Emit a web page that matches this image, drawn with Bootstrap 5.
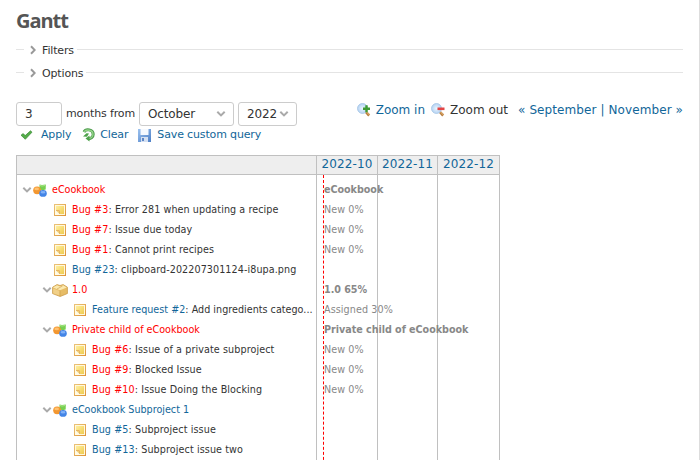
<!DOCTYPE html>
<html lang="en">
<head>
<meta charset="utf-8">
<title>Gantt</title>
<link href="https://cdn.jsdelivr.net/npm/bootstrap@5.3.0/dist/css/bootstrap.min.css" rel="stylesheet">
<style>
html,body{height:460px;overflow:hidden}
body{font:12px/18px Verdana,"DejaVu Sans",sans-serif;color:#333;background:#fff;border-right:1px solid #ddd}
a{color:#169;text-decoration:none}
svg{display:block;flex:none}
.page{padding:8px 16px 0}
h2.title{font:bold 20px/26px "Trebuchet MS","Open Sans",sans-serif;color:#555;letter-spacing:-1.05px;margin:0 0 8px}
.fold{height:16px;margin-bottom:7px;padding-top:1px;font-size:11px;letter-spacing:-.15px}
.fold::before{content:"";width:8px;border-top:1px solid #e4e4e4;margin:0 6px 3px 0}
.fold::after{content:"";flex:1;border-top:1px solid #e4e4e4;margin:0 0 3px 3px}
.fold svg{margin:0 6px 1px 0}
.field{height:24px;border:1px solid #ccc;border-radius:3px;padding:0 7px 0 8px;color:#333;background:#fff}
.query{margin-top:21px}
.controls{font-size:11px;letter-spacing:-.14px}
.controls .field{font-size:12px}
.contextual{height:17px;margin-top:-1px}
.contextual svg{margin-right:5px}
.contextual .zout{margin-left:6px}
.contextual .nav-months{margin-left:10px;letter-spacing:.09px}
.actions{height:18px;font-size:11px;letter-spacing:-.15px}
.gantt{width:484px;height:320px;margin-top:11px;display:grid;grid-template-columns:299px 61px 60px 62px;grid-template-rows:19px 300px;border:1px solid #c0c0c0}
.gantt .hd{background:#eee;border-bottom:1px solid #c0c0c0}
.gantt .month{border-left:1px solid #c0c0c0;text-align:center;line-height:17px;letter-spacing:.14px}
.gantt .line{border-left:1px solid #c0c0c0;grid-row:2}
.subjects{grid-column:1;grid-row:2;padding-top:5px}
.statuses{grid-column:2/5;grid-row:2;padding-top:5px;margin-left:7px;border-left:1px dashed red}
.rowline{height:20px;line-height:20px;font-size:9.6px;white-space:nowrap}
.subjects .rowline{padding-left:5px}
.subjects .lv1{padding-left:25px}
.subjects .issue1{padding-left:37px;letter-spacing:.08px}
.subjects .issue2{padding-left:57px;letter-spacing:.1px}
.subjects .long{letter-spacing:.02px}
.subjects svg{margin-right:6px}
.subjects svg.arr{margin-right:1px}
.subjects svg.pj{margin-right:5px}
.subjects svg.pk{margin:0 4px 0 -1px}
.late{color:red}
.statuses .rowline{color:#888;letter-spacing:.1px}
.statuses .fw-bold{letter-spacing:-.03px}
</style>
<script src="https://cdn.jsdelivr.net/npm/bootstrap@5.3.0/dist/js/bootstrap.bundle.min.js"></script>
</head>
<body>
<svg width="0" height="0" class="position-absolute">
<defs>
<linearGradient id="gold" x1="0" y1="0" x2="1" y2="1"><stop offset="0" stop-color="#fff0a0"/><stop offset="1" stop-color="#efcb50"/></linearGradient>
<linearGradient id="edge" x1="0" y1="0" x2="1" y2="1"><stop offset="0" stop-color="#ecc67c"/><stop offset="1" stop-color="#dc9136"/></linearGradient>
<radialGradient id="glass"><stop offset="0" stop-color="#eaf5ff"/><stop offset="1" stop-color="#b4d2f2"/></radialGradient>
<linearGradient id="disk" x1="0" y1="0" x2="1" y2="1"><stop offset="0" stop-color="#9dc3f0"/><stop offset="1" stop-color="#4d7fc6"/></linearGradient>
</defs>
<symbol id="note" viewBox="0 0 12 12"><path fill="url(#edge)" d="M0 0h12v12H0z"/><path fill="#fff8dc" d="M1 1h10v10H1z"/><path fill="url(#gold)" d="M2 2h8v8H2z"/><path fill="#fffbe6" d="M1 6h5v5H1z"/><path fill="#f3d078" d="M2 6.500 5.500 10V6.500z"/><path d="M2 6.500h3.500V10" fill="none" stroke="#dfa94e" stroke-width=".8"/></symbol>
<symbol id="projects" viewBox="0 0 14 13"><path fill="#76ce50" d="M6.500.5 9 .9l3.800-.5-.1 5-2.900.9-3.300-.9z"/><path d="m7 1.500 2 .5 3-.5" stroke="#a9e688" fill="none"/><circle cx="4.100" cy="6.300" r="3.900" fill="#f39730"/><ellipse cx="3.700" cy="4.900" rx="2.300" ry="1.400" fill="#ffc270"/><ellipse cx="10" cy="9.400" rx="3.800" ry="3.400" fill="#4385e6"/><ellipse cx="10" cy="8.300" rx="2.400" ry="1.200" fill="#82b2f8"/></symbol>
<symbol id="package" viewBox="0 0 16 13"><path fill="#e6bc66" stroke="#cb9a48" stroke-width=".8" d="M.6 3.200 5 .6l3 .9 3.200-.9 4.200 2.600v6.300L8.200 12.500.6 9.600z"/><path fill="#fbe9af" d="m1 3.500 4-2.300 3 1.200L11 1.200l3.800 2.400L8 6.300z"/><path fill="#f1d088" d="M1.200 4.400 7.700 6.900v4.700L1.200 9.200z"/><path d="M8 6.500v5.500M5 5l5.500-3" stroke="#cb9a48" stroke-width=".6"/></symbol>
<symbol id="down" viewBox="0 0 10 10"><path d="m1.300 2.700 3.700 3.700 3.700-3.700" fill="none" stroke="#aaa" stroke-width="2"/></symbol>
<symbol id="lens" viewBox="0 0 14 14"><path d="m8.800 8.800 3.400 3.700" stroke="#b87d3d" stroke-width="2.600"/><path d="m9.500 8.900 2.800 3" stroke="#edc084" stroke-width=".9"/><circle cx="5.500" cy="5.500" r="5" fill="url(#glass)" stroke="#a5c4e4" stroke-width=".8"/></symbol>
</svg>
<main class="page">
<h2 class="title">Gantt</h2>
<div class="fold d-flex align-items-center"><svg width="6" height="10" viewBox="0 0 6 10"><path d="m1 1.300 3.700 3.700L1 8.700" fill="none" stroke="#999" stroke-width="2"/></svg>Filters</div>
<div class="fold d-flex align-items-center"><svg width="6" height="10" viewBox="0 0 6 10"><path d="m1 1.300 3.700 3.700L1 8.700" fill="none" stroke="#999" stroke-width="2"/></svg>Options</div>
<div class="query d-flex justify-content-between align-items-start">
<div class="controls d-flex align-items-center">
<div class="field" style="width:46px;line-height:23px">3</div><span class="px-1">months from</span>
<div class="field d-flex align-items-center justify-content-between" style="width:95px">October<svg width="10" height="10"><use href="#down"/></svg></div>
<div class="field d-flex align-items-center justify-content-between ms-1" style="width:59px">2022<svg width="10" height="10"><use href="#down"/></svg></div>
</div>
<div class="contextual d-flex align-items-center">
<svg width="14" height="14"><use href="#lens"/><path d="M9.500 2.200v7M6 5.700H13" stroke="#3e9b35" stroke-width="2.400"/></svg><a href="#">Zoom in</a>
<svg class="zout" width="14" height="14"><use href="#lens"/><path d="M6.500 5.800H13.500" stroke="#e34545" stroke-width="2.600"/></svg><span>Zoom out</span>
<span class="nav-months"><a href="#">« September</a> <a href="#">|</a> <a href="#">November »</a></span>
</div>
</div>
<div class="actions d-flex align-items-center">
<svg width="13" height="10" viewBox="0 0 13 10" style="margin:0 8px 0 4px"><path d="M1 5.200 3.200 3.600 5.200 5.600 10.500.8 12 2.200 5.300 9.300z" fill="#55ad49" stroke="#368a35" stroke-width=".7"/></svg><a href="#">Apply</a>
<svg width="13" height="14" viewBox="0 0 13 14" style="margin:0 5px 0 11px"><path d="M2 4C3.800.3 11.200 1.300 11.200 6.200c0 3.200-2.500 4.600-4.700 4.500" fill="none" stroke="#4b9a4b" stroke-width="3"/><path d="M2 4C4 .8 11 1.700 11 6.300c0 3-2.300 4.300-4.500 4.100" fill="none" stroke="#94d489" stroke-width="1.400"/><path d="M7.500 7.500v6L3.500 10.500zM1 8.500 5 8.800 7 5.500 4.500 5.300z" fill="#4ea24b"/></svg><a href="#">Clear</a>
<svg width="13" height="13" viewBox="0 0 13 13" style="margin:0 6px 0 10px"><path d="M0 0h13v13H0z" fill="url(#disk)"/><path d="M2.500 0h8v6h-8z" fill="#f5f9ff"/><path d="M3 8h7v5H3z" fill="#d4e0f2"/><path d="M4 9h2v3H4z" fill="#5f86c4"/></svg><a href="#">Save custom query</a>
</div>
<section class="gantt">
<div class="hd"></div><div class="hd month"><a href="#">2022-10</a></div><div class="hd month"><a href="#">2022-11</a></div><div class="hd month"><a href="#">2022-12</a></div>
<div class="line" style="grid-column:2"></div><div class="line" style="grid-column:3"></div><div class="line" style="grid-column:4"></div>
<div class="subjects">
<div class="rowline d-flex align-items-center"><svg class="arr" width="10" height="10"><use href="#down"/></svg><svg class="pj" width="14" height="13"><use href="#projects"/></svg><a class="late" href="#">eCookbook</a></div>
<div class="rowline issue1 d-flex align-items-center"><svg width="12" height="12"><use href="#note"/></svg><span><a class="late" href="#">Bug #3</a>: Error 281 when updating a recipe</span></div>
<div class="rowline issue1 d-flex align-items-center"><svg width="12" height="12"><use href="#note"/></svg><span><a class="late" href="#">Bug #7</a>: Issue due today</span></div>
<div class="rowline issue1 d-flex align-items-center"><svg width="12" height="12"><use href="#note"/></svg><span><a class="late" href="#">Bug #1</a>: Cannot print recipes</span></div>
<div class="rowline issue1 d-flex align-items-center"><svg width="12" height="12"><use href="#note"/></svg><span><a href="#">Bug #23</a>: clipboard-202207301124-i8upa.png</span></div>
<div class="rowline lv1 d-flex align-items-center"><svg class="arr" width="10" height="10"><use href="#down"/></svg><svg class="pk" width="16" height="13"><use href="#package"/></svg><a class="late" href="#">1.0</a></div>
<div class="rowline issue2 long d-flex align-items-center"><svg width="12" height="12"><use href="#note"/></svg><span><a href="#">Feature request #2</a>: Add ingredients catego...</span></div>
<div class="rowline lv1 d-flex align-items-center"><svg class="arr" width="10" height="10"><use href="#down"/></svg><svg class="pj" width="14" height="13"><use href="#projects"/></svg><a class="late" href="#">Private child of eCookbook</a></div>
<div class="rowline issue2 d-flex align-items-center"><svg width="12" height="12"><use href="#note"/></svg><span><a class="late" href="#">Bug #6</a>: Issue of a private subproject</span></div>
<div class="rowline issue2 d-flex align-items-center"><svg width="12" height="12"><use href="#note"/></svg><span><a class="late" href="#">Bug #9</a>: Blocked Issue</span></div>
<div class="rowline issue2 d-flex align-items-center"><svg width="12" height="12"><use href="#note"/></svg><span><a class="late" href="#">Bug #10</a>: Issue Doing the Blocking</span></div>
<div class="rowline lv1 d-flex align-items-center"><svg class="arr" width="10" height="10"><use href="#down"/></svg><svg class="pj" width="14" height="13"><use href="#projects"/></svg><a href="#">eCookbook Subproject 1</a></div>
<div class="rowline issue2 d-flex align-items-center"><svg width="12" height="12"><use href="#note"/></svg><span><a href="#">Bug #5</a>: Subproject issue</span></div>
<div class="rowline issue2 d-flex align-items-center"><svg width="12" height="12"><use href="#note"/></svg><span><a href="#">Bug #13</a>: Subproject issue two</span></div>
</div>
<div class="statuses">
<div class="rowline fw-bold">eCookbook</div><div class="rowline">New 0%</div><div class="rowline">New 0%</div><div class="rowline">New 0%</div><div class="rowline"></div>
<div class="rowline fw-bold">1.0 65%</div><div class="rowline">Assigned 30%</div><div class="rowline fw-bold">Private child of eCookbook</div><div class="rowline">New 0%</div><div class="rowline">New 0%</div><div class="rowline">New 0%</div>
</div>
</section>
</main>
</body>
</html>
